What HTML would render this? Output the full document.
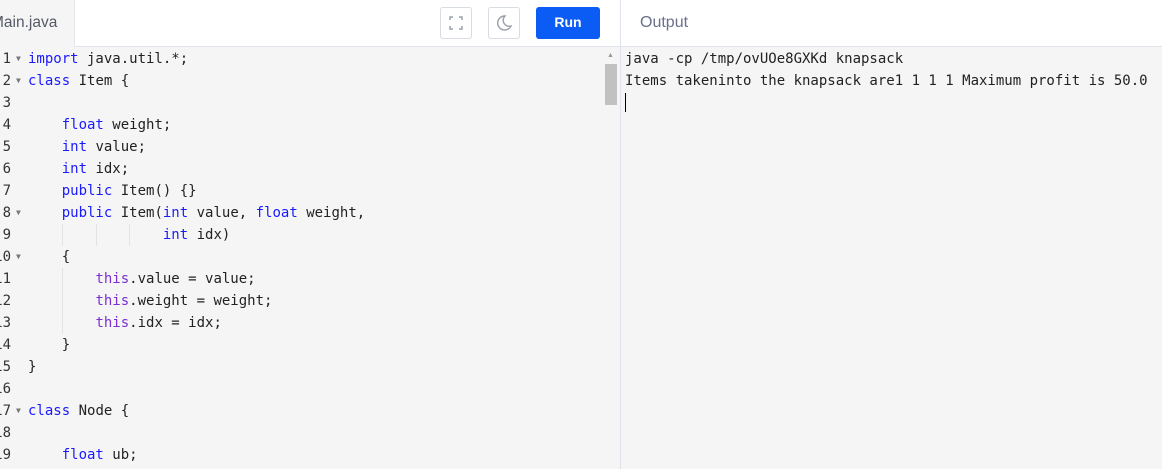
<!DOCTYPE html>
<html><head><style>
*{margin:0;padding:0;box-sizing:border-box}
body{width:1162px;height:469px;overflow:hidden;background:#f5f5f5;font-family:"Liberation Sans",sans-serif;position:relative}
.hdr{position:absolute;left:0;top:0;width:1162px;height:47px;background:#fff;border-bottom:1px solid #dfe3ea}
.tab{position:absolute;left:0;top:0;width:75px;height:47px;background:#f5f5f5;border-right:1px solid #e3e6eb;color:#555a66;font-size:16px;line-height:46px;overflow:hidden;white-space:nowrap}
.tab span{position:relative;left:-9px;font-size:15.5px}
.btn{position:absolute;top:7px;width:32px;height:32px;border:1px solid #d8dce3;border-radius:3px;background:#fff}
.run{position:absolute;left:536px;top:7px;width:64px;height:32px;background:#0b5cf5;border-radius:3px;color:#fff;font-weight:bold;font-size:14px;text-align:center;line-height:31px}
.sep{position:absolute;left:620px;top:0;width:1px;height:469px;background:#dfe3ea}
.out{position:absolute;left:640px;top:0;line-height:46px;color:#6b6f8a;font-size:16px}
.code{position:absolute;left:0;top:48px;font-family:"DejaVu Sans Mono","Liberation Mono",monospace;font-size:14px;color:#222}
.l{position:absolute;height:22px;line-height:22px;white-space:pre}
.n{position:absolute;height:22px;line-height:22px;text-align:right;width:24px;left:-13px;color:#333}
.f{position:absolute;left:16px;color:#777;font-size:8px;height:22px;line-height:22px}
.k{color:#1a1aff}.t{color:#7a2fd0}
.g{position:absolute;width:1px;height:22px;background:#e2e2e2}
.sb{position:absolute;left:603px;top:47px;width:17px;height:422px;background:#f5f5f5}
.th{position:absolute;left:605px;top:64px;width:12px;height:41px;background:#c1c1c1}
</style></head><body>
<div class="hdr"></div>
<div class="tab"><span>Main.java</span></div>
<div class="btn" style="left:440px"><svg width="30" height="30" viewBox="0 0 30 30"><path d="M9 12V9h3M18 9h3v3M21 18v3h-3M12 21H9v-3" fill="none" stroke="#9aa0aa" stroke-width="1.5"/></svg></div>
<div class="btn" style="left:488px"><svg width="30" height="30" viewBox="0 0 30 30"><path d="M16 8a7 7 0 1 0 6 10a6 6 0 0 1-6-10z" fill="none" stroke="#9aa0aa" stroke-width="1.4"/></svg></div>
<div class="run">Run</div>
<div class="out">Output</div>
<div class="sep"></div>
<div class="code">
<div class="n" style="top:0">1</div><div class="f" style="top:0">▼</div><div class="l" style="left:28px;top:0"><span class="k">import</span> java.util.*;</div>
<div class="n" style="top:22px">2</div><div class="f" style="top:22px">▼</div><div class="l" style="left:28px;top:22px"><span class="k">class</span> Item {</div>
<div class="n" style="top:44px">3</div>
<div class="n" style="top:66px">4</div><div class="l" style="left:28px;top:66px">    <span class="k">float</span> weight;</div>
<div class="n" style="top:88px">5</div><div class="l" style="left:28px;top:88px">    <span class="k">int</span> value;</div>
<div class="n" style="top:110px">6</div><div class="l" style="left:28px;top:110px">    <span class="k">int</span> idx;</div>
<div class="n" style="top:132px">7</div><div class="l" style="left:28px;top:132px">    <span class="k">public</span> Item() {}</div>
<div class="n" style="top:154px">8</div><div class="f" style="top:154px">▼</div><div class="l" style="left:28px;top:154px">    <span class="k">public</span> Item(<span class="k">int</span> value, <span class="k">float</span> weight,</div>
<div class="n" style="top:176px">9</div><div class="g" style="left:62px;top:176px"></div><div class="g" style="left:96px;top:176px"></div><div class="g" style="left:129px;top:176px"></div><div class="l" style="left:28px;top:176px">                <span class="k">int</span> idx)</div>
<div class="n" style="top:198px">10</div><div class="f" style="top:198px">▼</div><div class="l" style="left:28px;top:198px">    {</div>
<div class="n" style="top:220px">11</div><div class="g" style="left:62px;top:220px"></div><div class="l" style="left:28px;top:220px">        <span class="t">this</span>.value = value;</div>
<div class="n" style="top:242px">12</div><div class="g" style="left:62px;top:242px"></div><div class="l" style="left:28px;top:242px">        <span class="t">this</span>.weight = weight;</div>
<div class="n" style="top:264px">13</div><div class="g" style="left:62px;top:264px"></div><div class="l" style="left:28px;top:264px">        <span class="t">this</span>.idx = idx;</div>
<div class="n" style="top:286px">14</div><div class="l" style="left:28px;top:286px">    }</div>
<div class="n" style="top:308px">15</div><div class="l" style="left:28px;top:308px">}</div>
<div class="n" style="top:330px">16</div>
<div class="n" style="top:352px">17</div><div class="f" style="top:352px">▼</div><div class="l" style="left:28px;top:352px"><span class="k">class</span> Node {</div>
<div class="n" style="top:374px">18</div>
<div class="n" style="top:396px">19</div><div class="l" style="left:28px;top:396px">    <span class="k">float</span> ub;</div>
</div>
<div class="sb"></div><div class="th"></div>
<div style="position:absolute;left:607px;top:52px;color:#999;font-size:7px">▲</div>
<div class="code" style="left:625px">
<div class="l" style="left:0;top:0">java -cp /tmp/ovUOe8GXKd knapsack</div>
<div class="l" style="left:0;top:22px">Items takeninto the knapsack are1 1 1 1 Maximum profit is 50.0</div>
<div style="position:absolute;left:0;top:45px;width:1px;height:19px;background:#000"></div>
</div>
</body></html>
